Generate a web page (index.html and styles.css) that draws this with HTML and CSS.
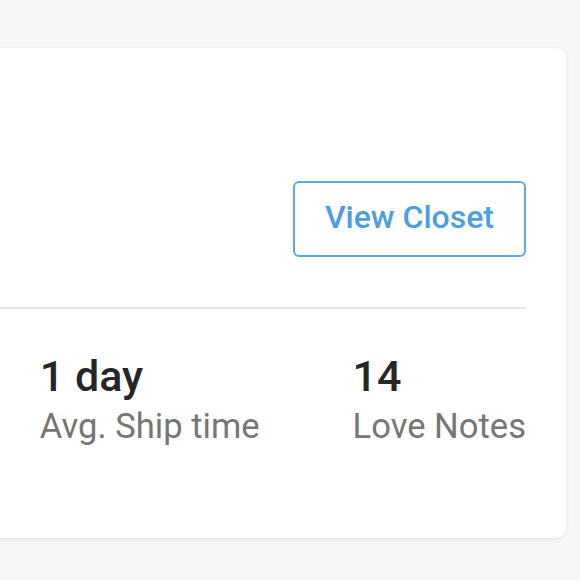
FILE: index.html
```html
<!DOCTYPE html>
<html lang="en">
<head>
<meta charset="utf-8">
<title>Closet</title>
<link rel="stylesheet" href="styles.css">
</head>
<body>
<div class="page">
  <section class="card">
    <div class="card-header">
      <button class="btn-outline" type="button">View Closet</button>
    </div>
    <hr class="divider">
    <div class="stats">
      <div class="stat">
        <div class="stat-value">1 day</div>
        <div class="stat-label">Avg. Ship time</div>
      </div>
      <div class="stat">
        <div class="stat-value">14</div>
        <div class="stat-label">Love Notes</div>
      </div>
    </div>
  </section>
</div>
</body>
</html>
```

FILE: styles.css
```css
html, body {
  margin: 0;
  padding: 0;
}
body {
  background: #f6f6f6;
  font-family: Roboto, "Liberation Sans", Arial, sans-serif;
  width: 580px;
  height: 580px;
  overflow: hidden;
}
.page {
  padding: 48px 14px 0 0;
}
.card {
  background: #ffffff;
  border-radius: 10px;
  box-shadow: 0 1px 4px rgba(0, 0, 0, 0.08);
  margin-left: -40px;
  padding: 0 40px 0 40px;
  height: 490px;
  box-sizing: border-box;
}
.card-header {
  padding-top: 133px;
  display: flex;
  justify-content: flex-end;
}
.btn-outline {
  font-family: Roboto, "Liberation Sans", Arial, sans-serif;
  font-size: 32px;
  font-weight: 500;
  color: #4b9fe0;
  background: #ffffff;
  border: 2px solid #5aa9e3;
  border-radius: 6px;
  height: 76px;
  padding: 0 30px 4px;
  line-height: 68px;
  cursor: pointer;
}
.divider {
  margin: 50px 0 0 0;
  border: 0;
  height: 2px;
  background: #e6e6e6;
}
.stats {
  display: flex;
  justify-content: flex-end;
  gap: 93px;
  margin-top: 46px;
}
.stat-value {
  font-size: 43px;
  line-height: 42px;
  font-weight: 500;
  color: #262626;
}
.stat-label {
  margin-top: 12px;
  font-size: 34.6px;
  line-height: 34px;
  color: #767676;
}
```
